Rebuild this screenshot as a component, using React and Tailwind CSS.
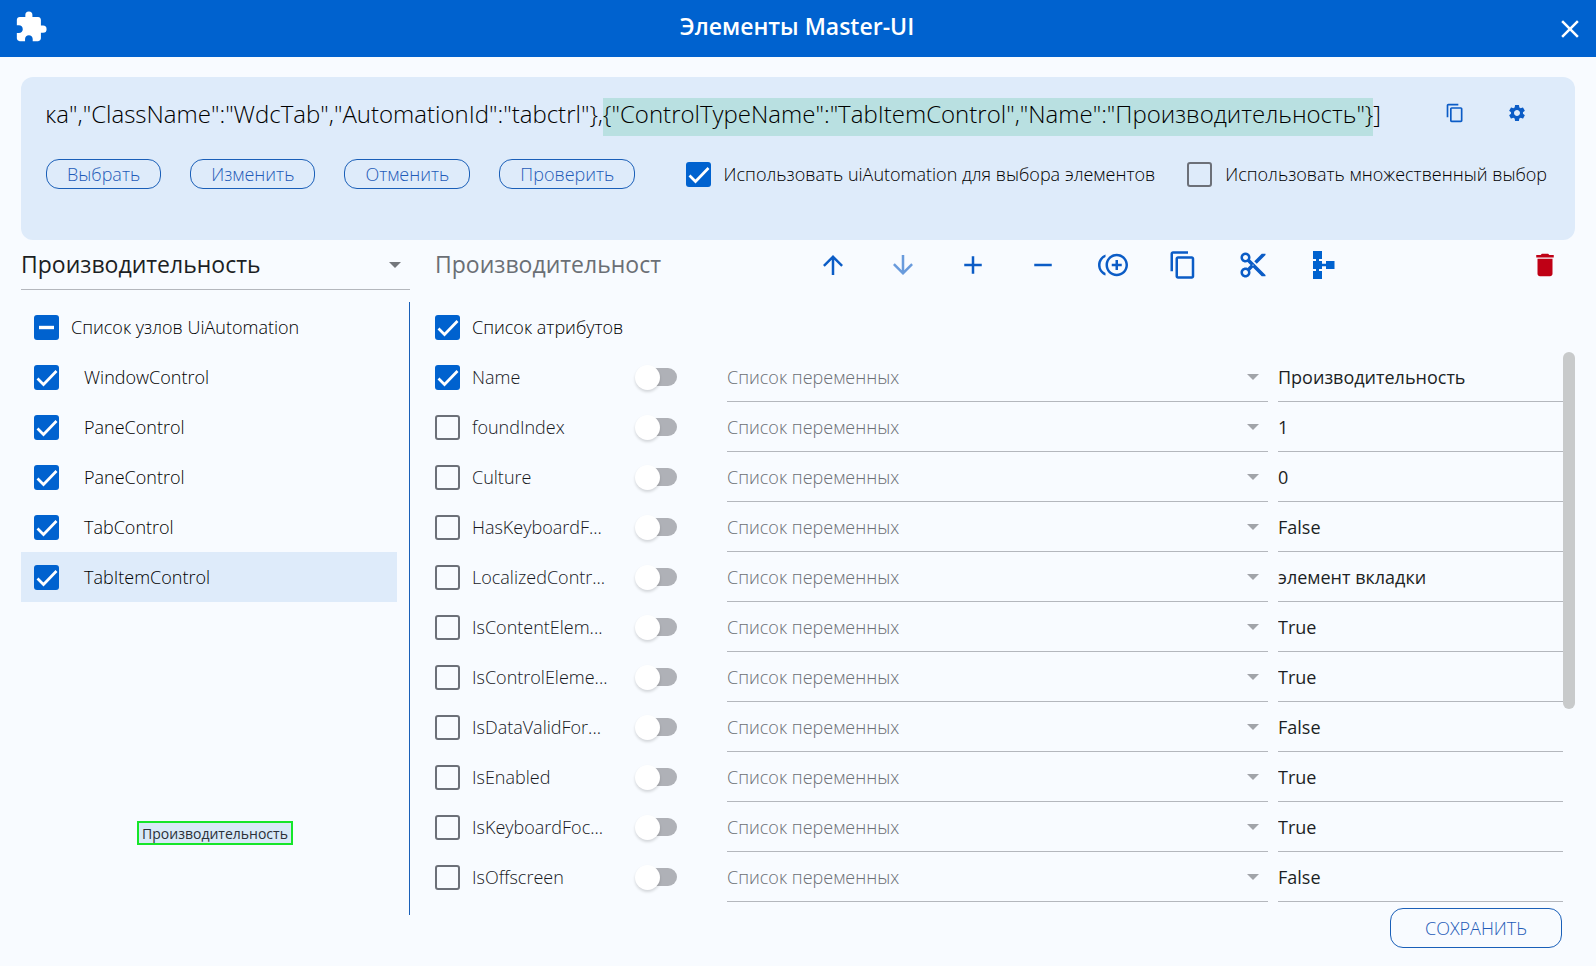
import { useState } from 'react';
import {
  MdAdd,
  MdArrowDownward,
  MdArrowUpward,
  MdClose,
  MdContentCopy,
  MdContentCut,
  MdControlPointDuplicate,
  MdDelete,
  MdExtension,
  MdRemove,
  MdSettings,
} from 'react-icons/md';

const NODES = ['WindowControl', 'PaneControl', 'PaneControl', 'TabControl', 'TabItemControl'];

const ATTRIBUTES = [
  { name: 'Name', value: 'Производительность', checked: true },
  { name: 'foundIndex', value: '1' },
  { name: 'Culture', value: '0' },
  { name: 'HasKeyboardF...', value: 'False' },
  { name: 'LocalizedContr...', value: 'элемент вкладки' },
  { name: 'IsContentElem...', value: 'True' },
  { name: 'IsControlEleme...', value: 'True' },
  { name: 'IsDataValidFor...', value: 'False' },
  { name: 'IsEnabled', value: 'True' },
  { name: 'IsKeyboardFoc...', value: 'True' },
  { name: 'IsOffscreen', value: 'False' },
];

function Checkbox({ id, defaultChecked = false, mixed = false }) {
  const [checked, setChecked] = useState(defaultChecked);
  const filled = checked || mixed;
  return (
    <span className="relative flex size-[25px] shrink-0">
      <input
        id={id}
        type="checkbox"
        checked={checked}
        onChange={(e) => setChecked(e.target.checked)}
        className={
          filled
            ? 'size-[25px] cursor-pointer appearance-none rounded-[3px] bg-[#0062cf]'
            : 'size-[25px] cursor-pointer appearance-none rounded-[3px] border-2 border-[#6c7078]'
        }
      />
      {filled && (
        <svg viewBox="0 0 25 25" className="pointer-events-none absolute inset-0 size-[25px]" fill="none" stroke="#fff">
          {mixed ? <path d="M5 12.5h15" strokeWidth="3.4" /> : <path d="M3.5 13.5l6 6L22.5 6" strokeWidth="2.7" />}
        </svg>
      )}
    </span>
  );
}

function Caret({ className }) {
  return (
    <svg viewBox="0 0 12 6" className={className} fill="currentColor">
      <path d="M0 0h12L6 6z" />
    </svg>
  );
}

function TreeIcon() {
  return (
    <svg viewBox="0 0 30 30" className="size-[30px]" fill="#0062cf">
      <path d="M5 1h9v8H5zM5 11h9v8H5zM5 21h9v8H5zM18 11h8.5v8H18z" />
      <path d="M8 8h3v14H8zM13 13.7h6v2.6h-6z" />
    </svg>
  );
}

function Toggle({ label }) {
  const [on, setOn] = useState(false);
  return (
    <button
      type="button"
      role="switch"
      aria-checked={on}
      aria-label={label}
      onClick={() => setOn(!on)}
      className={
        on
          ? 'flex h-[18px] w-10 items-center justify-end rounded-full bg-[#7fb0e7]'
          : 'flex h-[18px] w-10 items-center rounded-full bg-[#afb1b7]'
      }
    >
      <span className="-ml-0.5 size-[25px] shrink-0 rounded-full bg-white shadow-[0_2px_3px_rgba(0,0,0,0.15)]" />
    </button>
  );
}

function OutlineButton({ children }) {
  return (
    <button type="button" className="h-[30px] rounded-[13px] border border-[#1a5fb8] px-5 text-lg/7 font-light text-[#1f5bb8]">
      {children}
    </button>
  );
}

function ToolButton({ label, children, disabled = false }) {
  return (
    <button
      type="button"
      aria-label={label}
      disabled={disabled}
      className="flex size-[30px] items-center justify-center text-[#0b5cc6] disabled:opacity-60"
    >
      {children}
    </button>
  );
}

function AttributeRow({ index, attribute }) {
  const id = `attribute-${index}`;
  return (
    <div className="flex h-[50px] items-center">
      <Checkbox id={id} defaultChecked={attribute.checked} />
      <label htmlFor={id} className="ml-3 w-[165px] shrink-0 truncate text-lg font-light text-[#16181d]">
        {attribute.name}
      </label>
      <div className="flex w-[90px] shrink-0">
        <Toggle label={`Переменная: ${attribute.name}`} />
      </div>
      <div className="relative flex h-full min-w-0 flex-[541] items-center border-b border-[#b4b7bd]">
        <select
          aria-label={`Список переменных: ${attribute.name}`}
          className="h-full w-full appearance-none bg-transparent text-lg font-light text-[#6b6f75] outline-none"
        >
          <option>Список переменных</option>
        </select>
        <Caret className="pointer-events-none absolute right-[9px] h-[6px] w-[12px] text-[#a1a4a9]" />
      </div>
      <input
        aria-label={`Значение: ${attribute.name}`}
        defaultValue={attribute.value}
        className="ml-2.5 h-full min-w-0 flex-[285] border-b border-[#b4b7bd] bg-transparent text-lg text-[#1c1f24] outline-none"
      />
    </div>
  );
}

export default function App() {
  return (
    <div className="flex min-h-screen flex-col bg-[#f8fbff] font-['Open_Sans','Noto_Sans',sans-serif] text-black">
      <header className="flex h-[57px] items-center bg-[#0062cf] pr-0.5 pl-[14px] text-white">
        <MdExtension className="mb-1 size-[34px]" />
        <h1 className="flex-1 pb-1 text-center text-[23px] font-semibold">Элементы Master-UI</h1>
        <button type="button" aria-label="Закрыть" className="flex w-12 justify-center">
          <MdClose className="size-[30px]" />
        </button>
      </header>

      <section className="mx-[21px] mt-5 h-[163px] rounded-xl bg-[#deebfa] px-[25px] pt-[21px]">
        <div className="flex h-[38px] items-start">
          <div
            role="textbox"
            aria-label="Селектор"
            tabIndex={0}
            className="flex min-w-0 flex-1 justify-end overflow-hidden text-2xl/8 font-light whitespace-nowrap"
          >
            <span>дка","ClassName":"WdcTab","AutomationId":"tabctrl"&#125;,</span>
            <mark className="h-[38px] bg-[#b9e0e1]">&#123;"ControlTypeName":"TabItemControl","Name":"Производительность"&#125;</mark>
            <span>]</span>
          </div>
          <div className="ml-16 flex w-[105px] shrink-0 gap-[42px] pt-[5px] text-[#0b5cc6]">
            <button type="button" aria-label="Копировать селектор">
              <MdContentCopy className="size-5" />
            </button>
            <button type="button" aria-label="Настройки">
              <MdSettings className="size-5" />
            </button>
          </div>
        </div>
        <div className="mt-[23px] flex items-center justify-between">
          <div className="flex gap-[29px]">
            <OutlineButton>Выбрать</OutlineButton>
            <OutlineButton>Изменить</OutlineButton>
            <OutlineButton>Отменить</OutlineButton>
            <OutlineButton>Проверить</OutlineButton>
          </div>
          <div className="flex gap-8 pr-[3px] text-lg/[30px] font-light">
            <label className="flex items-center gap-[13px]">
              <Checkbox defaultChecked />
              Использовать uiAutomation для выбора элементов
            </label>
            <label className="flex items-center gap-[13px]">
              <Checkbox />
              Использовать множественный выбор
            </label>
          </div>
        </div>
      </section>

      <main className="flex flex-1 px-[21px]">
        <aside className="flex w-[389px] shrink-0 flex-col">
          <div className="relative flex h-[50px] items-center border-b border-[#b4b7bd]">
            <select aria-label="Элемент" className="h-full w-full appearance-none bg-transparent text-[23px] text-[#1c1f24] outline-none">
              <option>Производительность</option>
            </select>
            <Caret className="pointer-events-none absolute right-[9px] h-[6px] w-[12px] text-[#74777c]" />
          </div>
          <div className="mt-3 flex h-[613px] flex-col border-r border-[#1a5fb8]">
            <label className="flex h-[50px] items-center gap-3 pl-[13px] text-lg font-light">
              <Checkbox mixed />
              Список узлов UiAutomation
            </label>
            {NODES.map((node, i) => (
              <label
                key={i}
                className={
                  i === 4
                    ? 'mr-3 flex h-[50px] items-center gap-[25px] bg-[#deebfa] pl-[13px] text-lg font-light'
                    : 'mr-3 flex h-[50px] items-center gap-[25px] pl-[13px] text-lg font-light'
                }
              >
                <Checkbox defaultChecked />
                {node}
              </label>
            ))}
            <div className="mt-[219px] ml-[116px] flex h-6 w-[156px] items-center justify-center border-2 border-[#16e62a] bg-[#d8e9f7] pt-0.5 text-sm text-[#2a3038]">
              Производительность
            </div>
          </div>
        </aside>

        <section className="ml-[25px] flex min-w-0 flex-1 flex-col">
          <div className="flex h-[50px] items-center">
            <input
              aria-label="Имя элемента"
              defaultValue="Производительност"
              className="h-12 w-[383px] self-start bg-transparent text-[23px] text-[#6b6f75] outline-none"
            />
            <div className="flex flex-1 gap-10">
              <ToolButton label="Вверх"><MdArrowUpward className="size-[30px]" /></ToolButton>
              <ToolButton label="Вниз" disabled><MdArrowDownward className="size-[30px]" /></ToolButton>
              <ToolButton label="Добавить"><MdAdd className="size-[30px]" /></ToolButton>
              <ToolButton label="Убрать"><MdRemove className="size-[30px]" /></ToolButton>
              <ToolButton label="Дублировать"><MdControlPointDuplicate className="size-[30px]" /></ToolButton>
              <ToolButton label="Копировать"><MdContentCopy className="size-[30px]" /></ToolButton>
              <ToolButton label="Вырезать"><MdContentCut className="size-[30px]" /></ToolButton>
              <ToolButton label="Дерево"><TreeIcon /></ToolButton>
            </div>
            <button type="button" aria-label="Удалить" className="mr-[15px] text-[#bf0015]">
              <MdDelete className="size-[30px]" />
            </button>
          </div>
          <label className="mt-3 flex h-[50px] items-center gap-3 text-lg font-light">
            <Checkbox defaultChecked />
            Список атрибутов
          </label>
          <div className="flex">
            <div className="min-w-0 flex-1">
              {ATTRIBUTES.map((attribute, i) => (
                <AttributeRow key={attribute.name} index={i} attribute={attribute} />
              ))}
            </div>
            <div className="h-[357px] w-3 rounded-md bg-[#c8cacb]" />
          </div>
          <button
            type="button"
            className="mt-1.5 mr-[13px] h-10 self-end rounded-[13px] border border-[#1a5fb8] px-[34px] text-lg font-light text-[#1f5bb8]"
          >
            СОХРАНИТЬ
          </button>
        </section>
      </main>
    </div>
  );
}
